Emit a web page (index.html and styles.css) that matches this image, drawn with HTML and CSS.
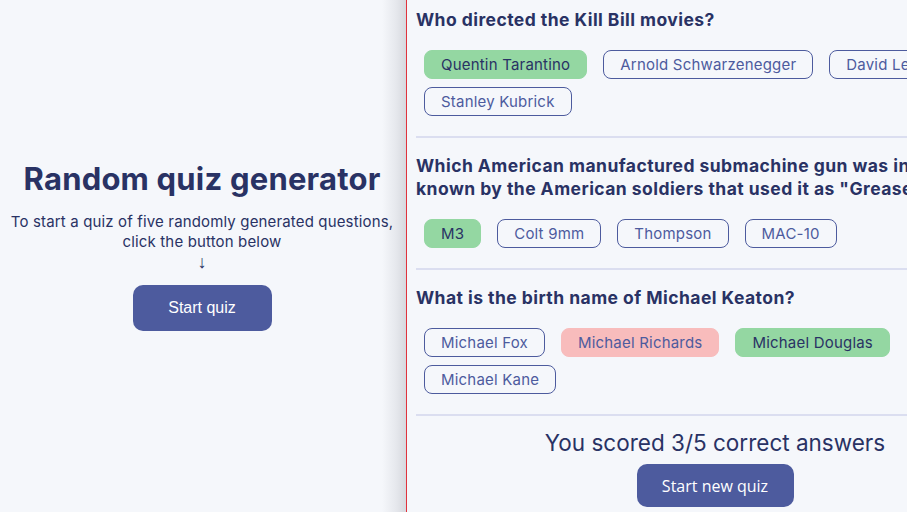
FILE: index.html
```html
<!DOCTYPE html>
<html>
<head>
<meta charset="utf-8">
<link rel="stylesheet" href="styles.css">
</head>
<body>
<div class="pane start-pane">
  <div class="intro">
    <h1 class="title">Random quiz generator</h1>
    <p class="desc">To start a quiz of five randomly generated questions,<br>click the button below</p>
    <span class="arrow">↓</span>
    <button class="primary-btn start-btn">Start quiz</button>
  </div>
</div>
<div class="pane quiz-pane">
  <div class="quiz">
    <section class="question first">
      <h2 class="q-title">Who directed the Kill Bill movies?</h2>
      <div class="answers">
        <span class="answer correct">Quentin Tarantino</span>
        <span class="answer">Arnold Schwarzenegger</span>
        <span class="answer">David Lean</span>
        <span class="answer">Stanley Kubrick</span>
      </div>
    </section>
    <section class="question">
      <h2 class="q-title">Which American manufactured submachine gun was informally known by the American soldiers that used it as "Grease Gun"?</h2>
      <div class="answers">
        <span class="answer correct">M3</span>
        <span class="answer">Colt 9mm</span>
        <span class="answer">Thompson</span>
        <span class="answer">MAC-10</span>
      </div>
    </section>
    <section class="question">
      <h2 class="q-title">What is the birth name of Michael Keaton?</h2>
      <div class="answers">
        <span class="answer">Michael Fox</span>
        <span class="answer wrong">Michael Richards</span>
        <span class="answer correct">Michael Douglas</span>
        <span class="answer">Michael Kane</span>
      </div>
    </section>
    <div class="result">
      <p class="score">You scored 3/5 correct answers</p>
      <button class="primary-btn new-btn">Start new quiz</button>
    </div>
  </div>
</div>
</body>
</html>
```
FILE: styles.css
```css
html, body {
  margin: 0;
  height: 100%;
}
body {
  display: flex;
  background: #F5F7FB;
  font-family: Inter, "Noto Sans", sans-serif;
  color: #293264;
  overflow: hidden;
}
.pane {
  height: 512px;
  box-sizing: border-box;
}
.start-pane {
  width: 406px;
  flex: none;
  display: flex;
  align-items: center;
  justify-content: center;
  padding-bottom: 22px;
  padding-right: 2px;
  background: linear-gradient(to right, #F5F7FB 0, #F5F7FB 382px, #e6e8ed 396px, #d6d8de 406px);
}
.intro {
  display: flex;
  flex-direction: column;
  align-items: center;
  text-align: center;
}
.title {
  margin: 0;
  font-size: 31px;
  line-height: 40px;
  font-weight: 700;
  letter-spacing: 0.2px;
  color: #293264;
}
.desc {
  margin: 13px 0 0;
  font-size: 15px;
  line-height: 20px;
  letter-spacing: 0.15px;
  color: #293264;
}
.arrow {
  display: block;
  height: 20px;
  line-height: 20px;
  font-family: "Liberation Sans", sans-serif;
  font-size: 18px;
  color: #293264;
}
.primary-btn {
  border: none;
  background: #4D5B9E;
  color: #fff;
  border-radius: 10px;
  font-size: 16px;
  cursor: pointer;
}
.start-btn {
  margin-top: 13px;
  width: 139px;
  height: 46px;
  font-family: "Liberation Sans", Arial, sans-serif;
}
.quiz-pane {
  flex: 1;
  border-left: 1px solid #E0323C;
  overflow: hidden;
  padding-left: 9px;
}
.quiz {
  width: 598px;
}
.question {
  padding: 16px 0 20px;
  border-bottom: 2px solid #DBDEF0;
}
.question.first {
  padding-top: 8px;
}
.q-title {
  margin: 0 0 19px;
  font-size: 17.5px;
  line-height: 23px;
  font-weight: 700;
  letter-spacing: 0.45px;
  color: #293264;
}
.answers {
  display: flex;
  flex-wrap: wrap;
  gap: 8px 16px;
  padding-left: 8px;
}
.answer {
  display: inline-block;
  box-sizing: border-box;
  height: 29px;
  line-height: 27px;
  padding: 0 16px;
  border: 1px solid #4D5B9E;
  border-radius: 8px;
  font-size: 15px;
  letter-spacing: 0.2px;
  color: #4D5B9E;
}
.answer.correct {
  background: #94D7A2;
  border-color: #94D7A2;
  color: #293264;
}
.answer.wrong {
  background: #F8BCBC;
  border-color: #F8BCBC;
  color: #4D5B9E;
}
.result {
  display: flex;
  flex-direction: column;
  align-items: center;
  padding-top: 14px;
}
.score {
  margin: 0;
  font-size: 22.5px;
  line-height: 26px;
  color: #293264;
}
.new-btn {
  margin-top: 8px;
  width: 157px;
  height: 43px;
  font-family: "Open Sans", sans-serif;
}
```
